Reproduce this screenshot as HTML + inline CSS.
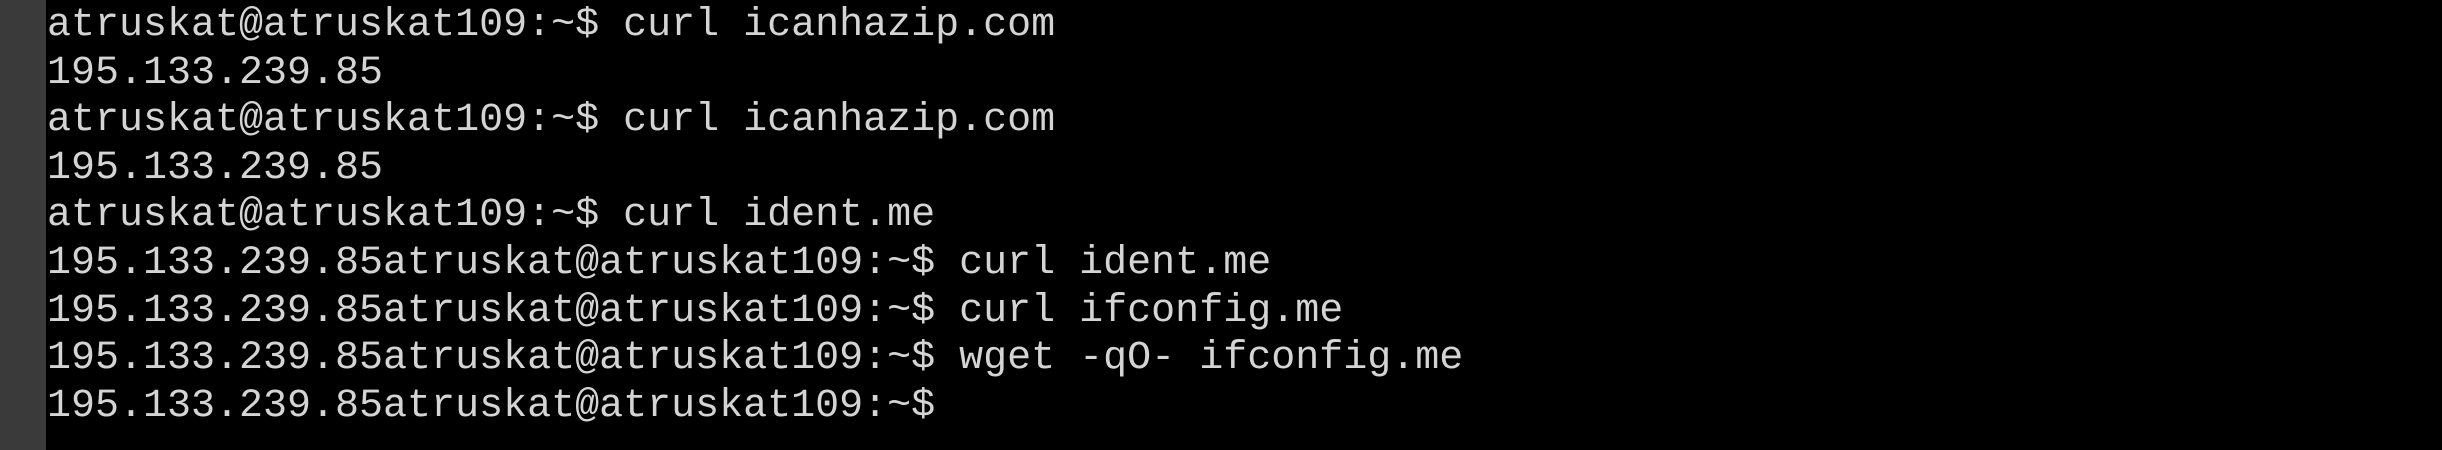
<!DOCTYPE html>
<html><head><style>
html,body{margin:0;padding:0;}
body{width:2442px;height:450px;background:#000;position:relative;overflow:hidden;}
.bar{position:absolute;left:0;top:0;width:46px;height:450px;background:#3a3a3a;}
pre{position:absolute;left:47px;top:2px;margin:0;font-family:"Liberation Mono",monospace;font-size:40px;line-height:47.6px;color:#d4d4d4;letter-spacing:0px;}
</style></head><body>
<div class="bar"></div>
<pre>atruskat@atruskat109:~$ curl icanhazip.com
195.133.239.85
atruskat@atruskat109:~$ curl icanhazip.com
195.133.239.85
atruskat@atruskat109:~$ curl ident.me
195.133.239.85atruskat@atruskat109:~$ curl ident.me
195.133.239.85atruskat@atruskat109:~$ curl ifconfig.me
195.133.239.85atruskat@atruskat109:~$ wget -qO- ifconfig.me
195.133.239.85atruskat@atruskat109:~$</pre>
</body></html>
